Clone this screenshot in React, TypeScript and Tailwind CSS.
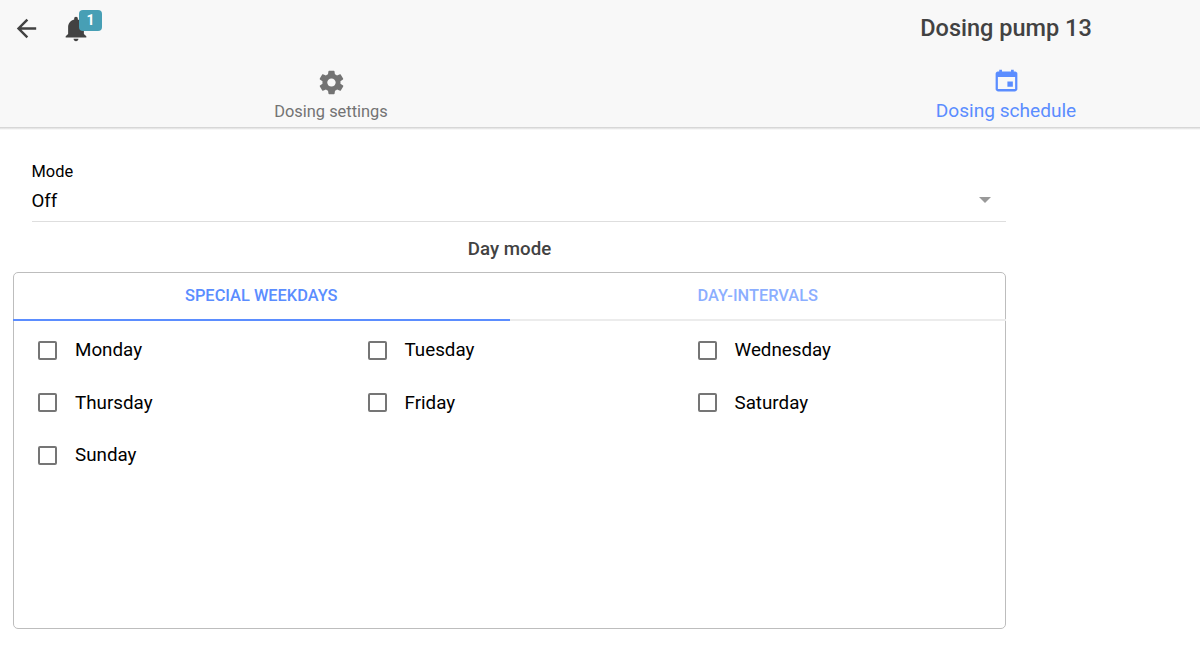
import { IoMdArrowBack, IoMdCalendar, IoMdNotifications, IoMdSettings } from 'react-icons/io';

const days = ['Monday', 'Tuesday', 'Wednesday', 'Thursday', 'Friday', 'Saturday', 'Sunday'];

const Header = () => {
    return (
        <header className="h-[127px] overflow-hidden bg-[#f8f8f8]">
            <div className="flex h-14 items-center">
                <div className="flex w-[662px] shrink-0 items-center pl-3">
                    <button type="button" aria-label="Back" className="text-[#424242]">
                        <IoMdArrowBack className="size-[29px]" />
                    </button>
                    <button type="button" aria-label="Notifications" className="relative ml-5 pt-px text-[#424242]">
                        <IoMdNotifications className="size-[30px]" />
                        <span className="absolute -top-[3px] left-[18px] flex h-[21px] w-[23px] items-center justify-center rounded bg-[#479fb5] text-[14px] font-bold text-white">
                            1
                        </span>
                    </button>
                </div>
                <h1 className="w-[688px] shrink-0 text-center text-[23.5px] leading-8 font-medium text-[#424242]">
                    Dosing pump 13
                </h1>
            </div>
            <nav className="flex h-[71px]">
                <button type="button" className="flex w-[662px] shrink-0 flex-col items-center pt-3 text-[#737373]">
                    <IoMdSettings className="size-[29px]" />
                    <span className="mt-[5px] text-[16.4px] leading-5">Dosing settings</span>
                </button>
                <button type="button" className="flex w-[688px] shrink-0 flex-col items-center pt-[10px] text-[#5b8dff]">
                    <IoMdCalendar className="size-[29px]" />
                    <span className="mt-[6px] text-[19.1px] leading-5">Dosing schedule</span>
                </button>
            </nav>
        </header>
    );
};

const DayCheckbox = ({ label }: { label: string }) => {
    return (
        <label className="flex h-[52.5px] items-center">
            <input type="checkbox" className="size-[19px] appearance-none rounded-[2px] border-2 border-[#757575] bg-white" />
            <span className="ml-[18px] text-[18.8px] leading-6 text-black">{label}</span>
        </label>
    );
};

const App = () => {
    return (
        <div className="h-[650px] w-[1200px] overflow-hidden bg-white font-[Roboto,sans-serif]">
            <Header />
            <div className="h-[3px] bg-gradient-to-b from-[#cfcfcf] to-white" />
            <main className="w-[1006px] pl-[13px]">
                <div className="ml-[18.5px] flex h-[92px] items-end justify-between border-b border-[#dedede] pb-2">
                    <div className="text-black">
                        <div className="text-[16.4px] leading-6">Mode</div>
                        <div className="mt-[5px] text-[18.7px] leading-6">Off</div>
                    </div>
                    <span className="mr-[15px] mb-[10px] border-x-[6px] border-t-[6px] border-x-transparent border-t-[#999999]" />
                </div>
                <h2 className="pt-[14px] text-center text-[18.7px] leading-[26px] font-medium text-[#424242]">Day mode</h2>
                <section className="mt-[10px] h-[357px] rounded-[5px] border border-[#bdbdbd]">
                    <div className="-mx-px flex h-12 text-[16.4px] leading-[44px] font-medium text-[#5b8dff]">
                        <button type="button" className="w-1/2 border-b-2 border-[#5b8dff]">
                            SPECIAL WEEKDAYS
                        </button>
                        <button type="button" className="w-1/2 border-b-2 border-[#ececec]">
                            <span className="opacity-70">DAY-INTERVALS</span>
                        </button>
                    </div>
                    <div className="grid grid-cols-[329.5px_330px_1fr] pt-[3px] pl-6">
                        {days.map((day) => (
                            <DayCheckbox key={day} label={day} />
                        ))}
                    </div>
                </section>
            </main>
        </div>
    );
};

export default App;
